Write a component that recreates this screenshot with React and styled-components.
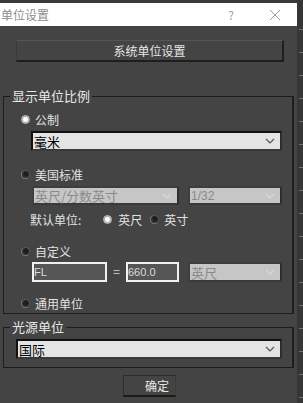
import React from "react";
import styled, { createGlobalStyle } from "styled-components";

const GlobalStyle = createGlobalStyle`
  html, body {
    margin: 0;
    padding: 0;
    background: #393939;
  }
  body {
    font-family: "Noto Sans CJK SC", "Noto Sans", sans-serif;
    font-size: 12px;
  }
`;

const Screen = styled.div`
  width: 303px;
  height: 403px;
  display: flex;
  overflow: hidden;
  background: #3a3a3a;
`;

const Dialog = styled.div`
  width: 297px;
  margin-top: 3px;
  display: flex;
  flex-direction: column;
  background: #444444;
`;

const Edge = styled.div`
  flex: 1;
  background-color: #363636;
  background-image: repeating-linear-gradient(
    to bottom,
    transparent 0px,
    transparent 22px,
    #707070 22px,
    #707070 23px
  );
  background-size: 4px 100%;
  background-repeat: repeat-y;
  background-position: right 7px;
`;

const TitleBar = styled.div`
  height: 23px;
  background: #ffffff;
  display: flex;
  align-items: center;
  color: #8c8c8c;
  font-size: 12px;
  padding-left: 1px;
`;

const Title = styled.span`
  flex: 1;
`;

const TitleIcon = styled.span`
  width: 14px;
  display: flex;
  justify-content: center;
  color: #a0a0a0;
  margin-right: ${(p) => p.$mr}px;
`;

const Body = styled.div`
  flex: 1;
  display: flex;
  flex-direction: column;
`;

const WideButton = styled.div`
  margin: 14px 13px 0 16px;
  height: 22px;
  box-sizing: border-box;
  border: 1px solid #2a2a2a;
  border-top-color: #555;
  border-left-color: #3a3a3a;
  border-right: 2px solid #1e1e1e;
  border-bottom: 2px solid #1e1e1e;
  color: #e6e6e6;
  display: flex;
  align-items: center;
  justify-content: center;
`;

const Group = styled.fieldset`
  margin: ${(p) => p.$mt}px 3px 0 3px;
  padding: 0;
  min-width: 0;
  border: 1px solid #1d1d1d;
  border-right-width: 2px;
  height: ${(p) => p.$h}px;
  box-sizing: border-box;
`;

const Legend = styled.legend`
  margin-left: 6px;
  padding: 0 2px;
  color: #e8e8e8;
  font-size: 13px;
  line-height: 16px;
`;

const Row = styled.div`
  display: flex;
  align-items: center;
  height: ${(p) => p.$h || 16}px;
  margin-top: ${(p) => p.$mt || 0}px;
  padding-left: ${(p) => p.$pl || 0}px;
  color: #e2e2e2;
`;

const Radio = styled.span`
  width: 9px;
  height: 9px;
  border-radius: 50%;
  box-sizing: border-box;
  flex: none;
  margin-right: ${(p) => p.$mr || 5}px;
  margin-left: ${(p) => p.$ml || 0}px;
  background: ${(p) =>
    p.$on
      ? "radial-gradient(circle, #ffffff 0 2px, #8e8e8e 3.5px)"
      : "radial-gradient(circle at 60% 40%, #1e1e1e 0 2px, #2c2c2c 3px)"};
  border: 1px solid ${(p) => (p.$on ? "#c4c4c4" : "#7a7a7a")};
  border-top-color: ${(p) => (p.$on ? "#c4c4c4" : "#555")};
  border-right-color: ${(p) => (p.$on ? "#c4c4c4" : "#555")};
`;

const Select = styled.div`
  box-sizing: border-box;
  width: ${(p) => p.$w}px;
  height: ${(p) => p.$h || 20}px;
  margin-left: ${(p) => p.$ml || 0}px;
  background: ${(p) => (p.$off ? "#c6c6c6" : "#e4e4e4")};
  color: ${(p) => (p.$off ? "#8a8a8a" : "#000")};
  border: 2px solid ${(p) => (p.$off ? "#3e3e3e" : "#111")};
  border-right-color: #2e2e2e;
  border-bottom-color: #3a3a3a;
  display: flex;
  align-items: center;
  padding-left: 1px;
  font-size: 13px;
`;

const SelectText = styled.span`
  flex: 1;
  font-family: ${(p) =>
    p.$latin ? '"Liberation Sans", sans-serif' : "inherit"};
  font-size: ${(p) => (p.$latin ? 12 : 13)}px;
`;

const Chevron = ({ off }) => (
  <svg width="10" height="6" viewBox="0 0 10 6" style={{ marginRight: 5 }}>
    <path
      d="M1 1 L5 5 L9 1"
      fill="none"
      stroke={off ? "#d8d8d8" : "#555"}
      strokeWidth="1.2"
    />
  </svg>
);

const TextBox = styled.div`
  box-sizing: border-box;
  width: ${(p) => p.$w}px;
  height: 20px;
  background: #565656;
  border: 2px solid #f0f0f0;
  color: #dcdcdc;
  font-family: "Liberation Sans", sans-serif;
  font-size: 11px;
  display: flex;
  align-items: center;
`;

const Equals = styled.span`
  width: 19px;
  text-align: center;
  color: #bdbdbd;
  font-family: "Liberation Sans", sans-serif;
`;

const OkButton = styled.div`
  margin: 7px 0 0 123px;
  width: 53px;
  height: 22px;
  box-sizing: border-box;
  border: 1px solid #2c2c2c;
  border-bottom: 2px solid #1a1a1a;
  border-right-color: #3c3c3c;
  color: #e8e8e8;
  display: flex;
  align-items: center;
  padding-left: 21px;
`;

export default function App() {
  return (
    <>
      <GlobalStyle />
      <Screen>
        <Dialog>
          <TitleBar>
            <Title>单位设置</Title>
            <TitleIcon $mr={30}>?</TitleIcon>
            <TitleIcon $mr={15}>
              <svg width="12" height="12" viewBox="0 0 12 12">
                <path
                  d="M1 1 L11 11 M11 1 L1 11"
                  stroke="#9a9a9a"
                  strokeWidth="1"
                />
              </svg>
            </TitleIcon>
          </TitleBar>
          <Body>
            <WideButton>系统单位设置</WideButton>

            <Group $mt={26} $h={226}>
              <Legend>显示单位比例</Legend>
              <Row $mt={7} $pl={17}>
                <Radio $on />
                公制
              </Row>
              <Row $mt={4} $h={20} $pl={27}>
                <Select $w={251}>
                  <SelectText>毫米</SelectText>
                  <Chevron />
                </Select>
              </Row>
              <Row $mt={15} $pl={17}>
                <Radio />
                美国标准
              </Row>
              <Row $mt={4} $h={19} $pl={28}>
                <Select $off $w={147} $h={19}>
                  <SelectText>英尺/分数英寸</SelectText>
                  <Chevron off />
                </Select>
                <Select $off $w={94} $h={19} $ml={9}>
                  <SelectText $latin>1/32</SelectText>
                  <Chevron off />
                </Select>
              </Row>
              <Row $mt={6} $pl={26}>
                默认单位:
                <Radio $on $ml={22} $mr={6} />
                英尺
                <Radio $ml={8} $mr={5} />
                英寸
              </Row>
              <Row $mt={16} $pl={17}>
                <Radio />
                自定义
              </Row>
              <Row $mt={3} $h={20} $pl={28}>
                <TextBox $w={75}>FL</TextBox>
                <Equals>=</Equals>
                <TextBox $w={53}>660.0</TextBox>
                <Select $off $w={94} $ml={9}>
                  <SelectText>英尺</SelectText>
                  <Chevron off />
                </Select>
              </Row>
              <Row $mt={13} $pl={17}>
                <Radio />
                通用单位
              </Row>
            </Group>

            <Group $mt={5} $h={49}>
              <Legend>光源单位</Legend>
              <Row $mt={4} $h={20} $pl={12}>
                <Select $w={266}>
                  <SelectText>国际</SelectText>
                  <Chevron />
                </Select>
              </Row>
            </Group>

            <OkButton>确定</OkButton>
          </Body>
        </Dialog>
        <Edge />
      </Screen>
    </>
  );
}
